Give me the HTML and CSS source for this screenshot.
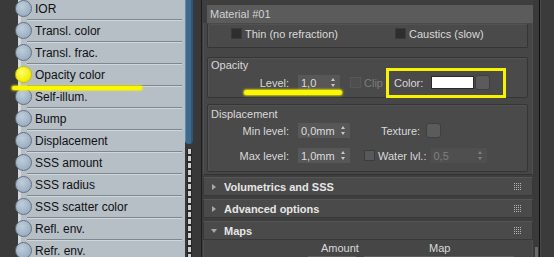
FILE: index.html
```html
<!DOCTYPE html>
<html lang="en">
<head>
  <meta charset="UTF-8">
  <title>Material editor</title>
  <link rel="stylesheet" href="styles.css">
</head>
<body>
<div class="screen">

  <div class="edge"></div>

  <div class="nodes">
    <div class="slot"><span class="pin"></span>IOR</div>
    <div class="slot"><span class="pin"></span>Transl. color</div>
    <div class="slot"><span class="pin"></span>Transl. frac.</div>
    <div class="slot"><span class="pin lit"></span>Opacity color</div>
    <div class="slot"><span class="pin"></span>Self-illum.</div>
    <div class="slot"><span class="pin"></span>Bump</div>
    <div class="slot"><span class="pin"></span>Displacement</div>
    <div class="slot"><span class="pin"></span>SSS amount</div>
    <div class="slot"><span class="pin"></span>SSS radius</div>
    <div class="slot"><span class="pin"></span>SSS scatter color</div>
    <div class="slot"><span class="pin"></span>Refl. env.</div>
    <div class="slot"><span class="pin"></span>Refr. env.</div>
  </div>

  <div class="wire">
    <div class="wire-blue"></div>
    <div class="wire-ladder"></div>
  </div>

  <div class="gutter"></div>

  <div class="editor">
    <div class="rollup">
      <div class="mat-name">Material #01</div>

      <div class="rollout-open">
        <div class="group first">
          <div class="row">
            <div class="check-col"><span class="check"></span>Thin (no refraction)</div>
            <div><span class="check"></span>Caustics (slow)</div>
          </div>
        </div>

        <div class="group opacity">
          <div class="legend">Opacity</div>
          <div class="row">
            <span class="lbl">Level:</span>
            <span class="spin short">1,0<i class="arrows"></i></span>
            <span class="check off"></span><span class="dim">Clip</span>
            <span class="color-pick">Color: <span class="swatch"></span><span class="mapbtn"></span></span>
          </div>
        </div>

        <div class="group displace">
          <div class="legend">Displacement</div>
          <div class="row">
            <span class="lbl">Min level:</span>
            <span class="spin">0,0mm<i class="arrows"></i></span>
            <span class="tex-lbl">Texture:</span>
            <span class="mapbtn"></span>
          </div>
          <div class="row second">
            <span class="lbl">Max level:</span>
            <span class="spin">1,0mm<i class="arrows"></i></span>
            <span class="check water"></span><span class="water-lbl">Water lvl.:</span>
            <span class="spin off">0,5<i class="arrows"></i></span>
          </div>
        </div>
      </div>

      <div class="bar"><i class="tri"></i>Volumetrics and SSS<span class="grip"><svg width="8" height="8"><rect x="0" y="0" width="1" height="1"/><rect x="2" y="0" width="1" height="1"/><rect x="4" y="0" width="1" height="1"/><rect x="6" y="0" width="1" height="1"/><rect x="0" y="2" width="1" height="1"/><rect x="2" y="2" width="1" height="1"/><rect x="4" y="2" width="1" height="1"/><rect x="6" y="2" width="1" height="1"/><rect x="0" y="4" width="1" height="1"/><rect x="2" y="4" width="1" height="1"/><rect x="4" y="4" width="1" height="1"/><rect x="6" y="4" width="1" height="1"/><rect x="0" y="6" width="1" height="1"/><rect x="2" y="6" width="1" height="1"/><rect x="4" y="6" width="1" height="1"/><rect x="6" y="6" width="1" height="1"/></svg></span></div>
      <div class="bar"><i class="tri"></i>Advanced options<span class="grip"><svg width="8" height="8"><rect x="0" y="0" width="1" height="1"/><rect x="2" y="0" width="1" height="1"/><rect x="4" y="0" width="1" height="1"/><rect x="6" y="0" width="1" height="1"/><rect x="0" y="2" width="1" height="1"/><rect x="2" y="2" width="1" height="1"/><rect x="4" y="2" width="1" height="1"/><rect x="6" y="2" width="1" height="1"/><rect x="0" y="4" width="1" height="1"/><rect x="2" y="4" width="1" height="1"/><rect x="4" y="4" width="1" height="1"/><rect x="6" y="4" width="1" height="1"/><rect x="0" y="6" width="1" height="1"/><rect x="2" y="6" width="1" height="1"/><rect x="4" y="6" width="1" height="1"/><rect x="6" y="6" width="1" height="1"/></svg></span></div>
      <div class="bar open"><i class="tri down"></i>Maps<span class="grip"><svg width="8" height="8"><rect x="0" y="0" width="1" height="1"/><rect x="2" y="0" width="1" height="1"/><rect x="4" y="0" width="1" height="1"/><rect x="6" y="0" width="1" height="1"/><rect x="0" y="2" width="1" height="1"/><rect x="2" y="2" width="1" height="1"/><rect x="4" y="2" width="1" height="1"/><rect x="6" y="2" width="1" height="1"/><rect x="0" y="4" width="1" height="1"/><rect x="2" y="4" width="1" height="1"/><rect x="4" y="4" width="1" height="1"/><rect x="6" y="4" width="1" height="1"/><rect x="0" y="6" width="1" height="1"/><rect x="2" y="6" width="1" height="1"/><rect x="4" y="6" width="1" height="1"/><rect x="6" y="6" width="1" height="1"/></svg></span></div>
      <div class="maps">
        <div class="maps-head"><span class="amount">Amount</span><span class="map">Map</span></div>
        <div class="maps-row"><span class="box amt"></span><span class="box mapfield"></span></div>
      </div>
    </div>
    <div class="track"><span class="thumb"></span></div>
  </div>

  <div class="side"></div>

  <!-- highlighter marks drawn over the screenshot -->
  <span class="mark mark-left"></span>
  <span class="mark mark-level"></span>
</div>
</body>
</html>
```

FILE: styles.css
```css
html, body {
  margin: 0;
  padding: 0;
  background: #3b3b3b;
}

.screen {
  position: relative;
  display: flex;
  width: 554px;
  height: 257px;
  overflow: hidden;
  font-family: "Liberation Sans", Arial, sans-serif;
}

/* node side */
.edge {
  width: 18px;
  flex: none;
  background: #3a3a3a;
}

.nodes {
  width: 164px;
  flex: none;
  background: #b6bec6;
  border-left: 3px solid #d3d7db;
}

.slot {
  display: flex;
  align-items: center;
  height: 21px;
  margin: 0 3px 0 6px;
  border-bottom: 1px solid #7e868e;
  box-shadow: 0 1px 0 #d0d6dc;
  font-size: 12px;
  color: #111;
}

.slot:first-child {
  margin-top: -2px;
}

.pin {
  width: 15px;
  height: 15px;
  margin-left: -12px;
  margin-right: 3px;
  border: 1px solid #66707a;
  border-radius: 50%;
  background: radial-gradient(circle at 40% 35%, #bfcddb, #9bb0c6 70%);
  flex: none;
}

.pin.lit {
  border-color: #c9c200;
  background: radial-gradient(circle at 40% 35%, #ffff70, #f2ec00 70%);
}

.wire {
  width: 8px;
  flex: none;
  display: flex;
  flex-direction: column;
  background: #383838;
}

.wire-blue {
  height: 144px;
  background: linear-gradient(90deg, #5d8cb0 0 1px, #3d6a8d 1px 6px, #2f5676 6px);
  border-radius: 0 0 4px 4px;
}

.wire-ladder {
  flex: 1;
  margin: 5px 1px 0 2px;
  border-left: 1px solid #262626;
  border-right: 1px solid #262626;
  background: repeating-linear-gradient(#d0d0d0 0 5px, #2a2a2a 5px 7px);
}

.gutter {
  width: 8px;
  flex: none;
  background: #383838;
  border-right: 1px solid #1c1c1c;
}

/* material editor */
.editor {
  width: 337px;
  flex: none;
  display: flex;
  background: #3e3e3e;
  color: #d9d9d9;
  font-size: 11px;
}

.rollup {
  width: 330px;
  margin-left: 1px;
}

.track {
  position: relative;
  width: 6px;
  background: #3a3a3a;
}

.thumb {
  position: absolute;
  left: 2px;
  top: 247px;
  width: 3px;
  height: 12px;
  background: #6a6a6a;
}

.side {
  flex: 1;
  background: #3b3b3b;
  border-left: 1px solid #111;
  box-shadow: inset 1px 0 0 #4a4a4a;
}

.mat-name {
  height: 18px;
  line-height: 18px;
  margin: 5px 0 0 4px;
  padding-left: 3px;
  background: #5b5b5b;
  color: #d2d2d2;
}

.rollout-open {
  background: #464646;
  border-left: 1px solid #505050;
  border-right: 1px solid #505050;
  border-bottom: 1px solid #333;
  padding: 0 4px 2px 3px;
}

.group {
  border: 1px solid #353535;
  border-radius: 2px;
  background: #4a4a4a;
  box-shadow: inset 1px 1px 0 #525252;
}

.group.first {
  border-top-color: #4a4a4a;
  padding: 2px 0 6px 23px;
}

.group.first .row {
  margin-top: 0;
}

.group.opacity {
  margin-top: 9px;
  padding: 1px 0 7px;
}

.group.displace {
  margin-top: 6px;
  padding: 3px 0 8px;
}

.group.displace .legend + .row {
  margin-top: 2px;
}

.legend {
  height: 13px;
  line-height: 13px;
  padding-left: 3px;
}

.row {
  display: flex;
  align-items: center;
  height: 15px;
  margin-top: 3px;
}

.row.second {
  margin-top: 10px;
}

.check-col {
  width: 164px;
  display: flex;
  align-items: center;
}

.row > div {
  display: flex;
  align-items: center;
}

.check {
  width: 9px;
  height: 9px;
  margin-right: 3px;
  background: #2e2e2e;
  border: 1px solid #3a3a3a;
  flex: none;
}

.check.off {
  background: #4e4e4e;
  border-color: #575757;
  margin-left: 10px;
}

.check.water {
  margin-left: 14px;
  background: #585858;
  border-color: #3c3c3c;
}

.dim {
  color: #7c7c7c;
}

.lbl {
  width: 81px;
  text-align: right;
  margin-right: 9px;
  flex: none;
}

.spin {
  position: relative;
  display: flex;
  align-items: center;
  width: 52px;
  height: 15px;
  padding-left: 3px;
  box-sizing: border-box;
  background: #575757;
  color: #dcdcdc;
  flex: none;
}

.spin.short {
  width: 42px;
}

.spin.off {
  width: 56px;
  color: #808080;
  background: #4f4f4f;
}

.arrows {
  position: absolute;
  right: 4px;
  top: 3px;
  width: 5px;
  height: 9px;
}

.arrows::before,
.arrows::after {
  content: "";
  position: absolute;
  left: 0;
  border-left: 2.5px solid transparent;
  border-right: 2.5px solid transparent;
}

.arrows::before {
  top: 0;
  border-bottom: 3px solid #c8c8c8;
}

.arrows::after {
  bottom: 0;
  border-top: 3px solid #c8c8c8;
}

.spin.off .arrows::before { border-bottom-color: #808080; }
.spin.off .arrows::after { border-top-color: #808080; }

.color-pick {
  display: flex;
  align-items: center;
  margin-left: 6px;
  padding: 4px 13px 4px 5px;
  outline: 3px solid #f6f200;
  height: 16px;
}

.swatch {
  width: 41px;
  height: 11px;
  margin-left: 8px;
  background: #fff;
  border: 1px solid #2a2a2a;
}

.mapbtn {
  width: 13px;
  height: 13px;
  margin-left: 1px;
  border-radius: 3px;
  background: #5b5b5b;
  border: 1px solid #3f3f3f;
  flex: none;
}

.tex-lbl {
  margin-left: 31px;
  margin-right: 5px;
}

.water-lbl {
  margin-right: 4px;
}

/* collapsed rollouts */
.bar {
  position: relative;
  display: flex;
  align-items: center;
  height: 17px;
  margin-top: 2px;
  padding-left: 20px;
  background: #4a4a4a;
  border: 1px solid #383838;
  border-top-color: #555;
  font-weight: bold;
  color: #e6e6e6;
}

.bar + .bar {
  margin-top: 3px;
}

.tri {
  position: absolute;
  left: 8px;
  top: 6px;
  border-top: 3px solid transparent;
  border-bottom: 3px solid transparent;
  border-left: 4px solid #a8a8a8;
}

.tri.down {
  left: 7px;
  top: 7px;
  border-left: 3px solid transparent;
  border-right: 3px solid transparent;
  border-top: 4px solid #a8a8a8;
  border-bottom: 0;
}

.grip {
  position: absolute;
  right: 10px;
  top: 5px;
  width: 8px;
  height: 8px;
}

.grip svg {
  display: block;
  fill: #b4b4b4;
}

.maps {
  background: #464646;
  border-left: 1px solid #505050;
  border-right: 1px solid #505050;
  height: 40px;
}

.maps-head {
  position: relative;
  height: 16px;
  line-height: 16px;
}

.amount {
  position: absolute;
  left: 117px;
}

.map {
  position: absolute;
  left: 225px;
}

.maps-row {
  display: flex;
  gap: 8px;
  padding-left: 104px;
}

.box {
  height: 14px;
  background: #555;
  border-top: 1px solid #5e5e5e;
}

.amt {
  width: 48px;
}

.mapfield {
  width: 150px;
}

/* yellow highlighter strokes */
.mark {
  position: absolute;
  background: #fbf700;
  border-radius: 3px;
  box-shadow: 0 0 2px 1px rgba(250, 245, 0, 0.7);
}

.mark-left {
  left: 12px;
  top: 86px;
  width: 130px;
  height: 4px;
}

.mark-level {
  left: 244px;
  top: 90px;
  width: 98px;
  height: 5px;
}
```
